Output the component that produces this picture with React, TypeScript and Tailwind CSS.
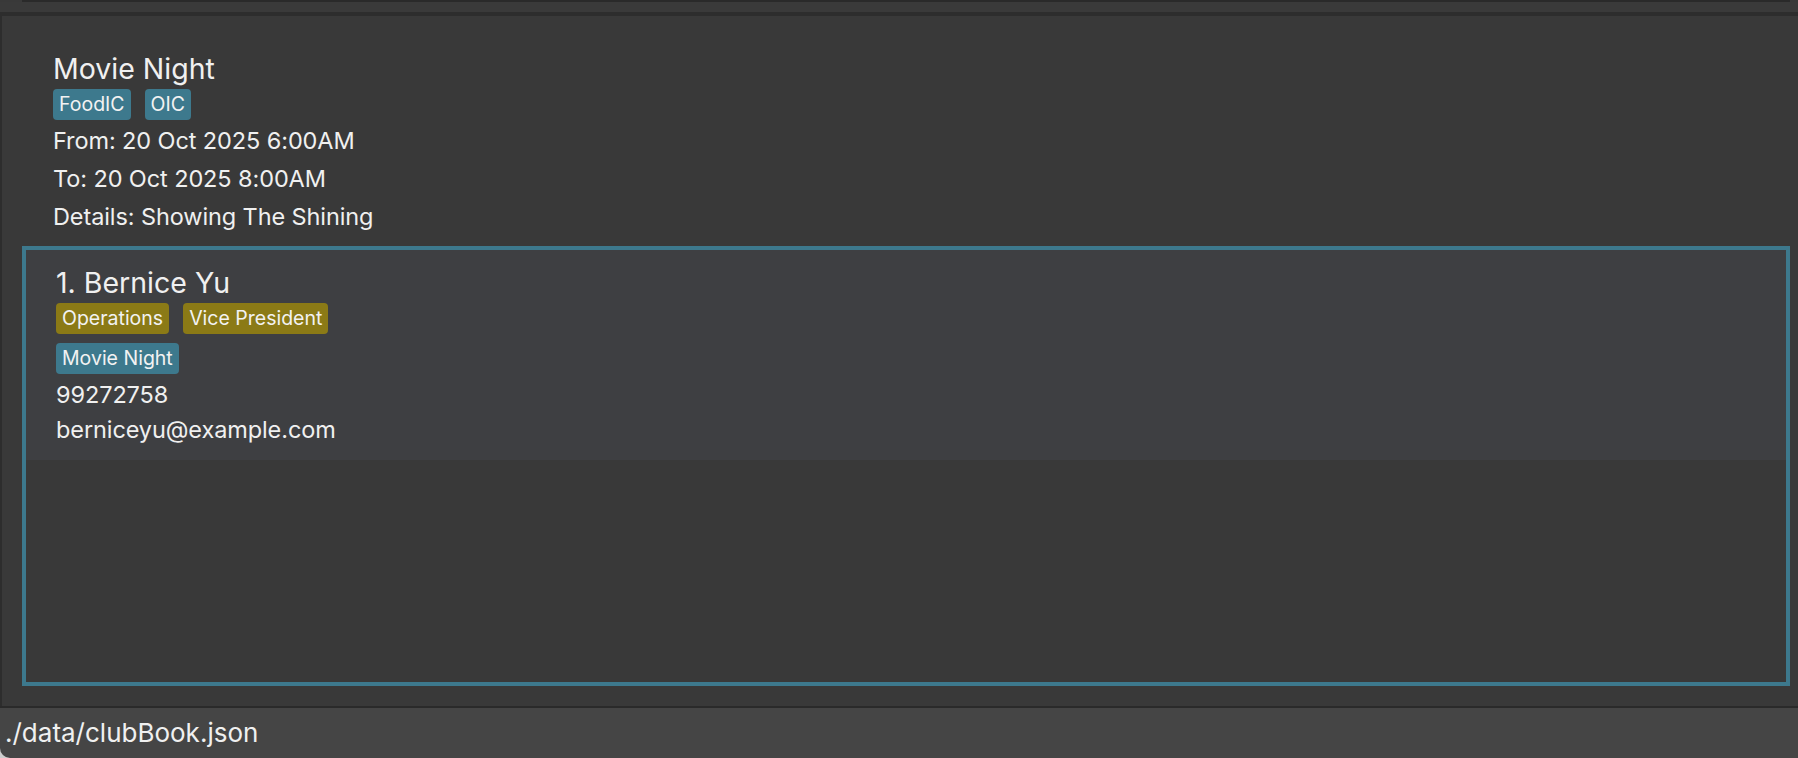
import React from 'react';

type TagProps = { label: string; tone: 'teal' | 'olive' };

const Tag: React.FC<TagProps> = ({ label, tone }) => (
  <span
    className={
      tone === 'teal'
        ? 'inline-block h-[31px] rounded-[4px] bg-[#3d798d] px-[6px] text-[19.5px] leading-[31px] text-[#f2f2f2]'
        : 'inline-block h-[31px] rounded-[4px] bg-[#8b7a16] px-[6px] text-[19.5px] leading-[31px] text-[#f2f2f2]'
    }
  >
    {label}
  </span>
);

export default function App() {
  return (
    <div className="flex h-[758px] w-[1798px] flex-col overflow-hidden bg-[#393939] font-['Inter',sans-serif] text-[#f0f0f0]">
      {/* tail of the previous card */}
      <div className="ml-[22px] mr-[8px] h-[2px] bg-[#2a2a2a]" />
      <div className="h-[10px] bg-[#3a3a3a]" />
      <div className="h-[4px] bg-[#2d2d2d]" />

      <div className="flex flex-1 flex-col border-l-2 border-[#2d2d2d]">
        {/* event header */}
        <div className="pl-[51px] pt-[35px]">
          <div className="text-[28.5px] leading-[36px]">Movie Night</div>
          <div className="mt-[2px] flex gap-[14px]">
            <Tag label="FoodIC" tone="teal" />
            <Tag label="OIC" tone="teal" />
          </div>
          <div className="mt-[2px] text-[23.5px] leading-[38px] tracking-[-0.1px]">
            <div>From: 20 Oct 2025 6:00AM</div>
            <div>To: 20 Oct 2025 8:00AM</div>
            <div>Details: Showing The Shining</div>
          </div>
        </div>

        {/* member list */}
        <div className="mb-[20px] ml-[20px] mr-[8px] mt-[10px] flex-1 border-4 border-[#3d798d]">
          <div className="bg-[#3e3f42] pb-[13px] pl-[30px] pt-[15px]">
            <div className="text-[28.5px] leading-[36px]">1. Bernice Yu</div>
            <div className="mt-[2px] flex gap-[14px]">
              <Tag label="Operations" tone="olive" />
              <Tag label="Vice President" tone="olive" />
            </div>
            <div className="mt-[9px] flex gap-[14px]">
              <Tag label="Movie Night" tone="teal" />
            </div>
            <div className="mt-[3px] text-[23.5px] leading-[35px] tracking-[-0.1px]">
              <div>99272758</div>
              <div>berniceyu@example.com</div>
            </div>
          </div>
        </div>
      </div>

      <div className="h-[2px] bg-[#2a2a2a]" />
      <div className="bg-[#cdcdcd]">
        <div className="flex h-[50px] items-center rounded-bl-[10px] bg-[#454545] pl-[5px] text-[26px] leading-[50px]">
          ./data/clubBook.json
        </div>
      </div>
    </div>
  );
}
